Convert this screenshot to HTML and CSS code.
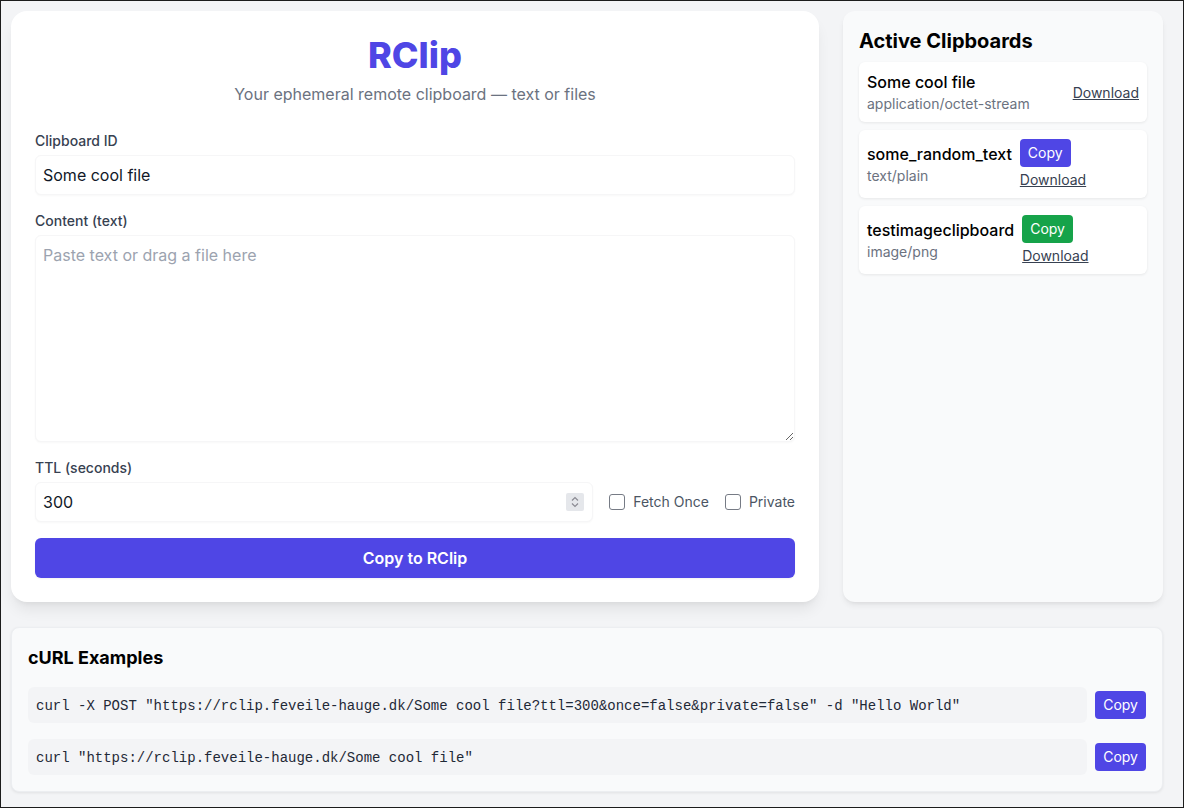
FILE: index.html
```html
<!DOCTYPE html>
<html lang="en">
<head>
<meta charset="utf-8">
<title>RClip</title>
<link rel="stylesheet" href="styles.css">
</head>
<body>
<div class="frame">
  <div class="top">
    <main class="card">
      <h1 class="title">RClip</h1>
      <p class="subtitle">Your ephemeral remote clipboard — text or files</p>

      <label class="label">Clipboard ID</label>
      <input class="field" type="text" value="Some cool file">

      <label class="label">Content (text)</label>
      <textarea class="field area" placeholder="Paste text or drag a file here"></textarea>

      <label class="label">TTL (seconds)</label>
      <div class="ttl-row">
        <div class="field num">
          <span class="num-val">300</span>
          <span class="spin">
            <svg width="10" height="14" viewBox="0 0 10 14"><path d="M2 5.5 5 2.5 8 5.5M2 8.5 5 11.5 8 8.5" fill="none" stroke="#8b8b93" stroke-width="1.2"/></svg>
          </span>
        </div>
        <label class="check"><span class="box"></span>Fetch Once</label>
        <label class="check"><span class="box"></span>Private</label>
      </div>

      <button class="primary">Copy to RClip</button>
    </main>

    <aside class="panel">
      <h2 class="panel-title">Active Clipboards</h2>
      <div class="items">
        <div class="item">
          <div class="meta">
            <div class="name">Some cool file</div>
            <div class="type">application/octet-stream</div>
          </div>
          <div class="actions"><a class="dl">Download</a></div>
        </div>
        <div class="item">
          <div class="meta">
            <div class="name">some_random_text</div>
            <div class="type">text/plain</div>
          </div>
          <div class="actions"><button class="btn">Copy</button><a class="dl">Download</a></div>
        </div>
        <div class="item">
          <div class="meta">
            <div class="name">testimageclipboard</div>
            <div class="type">image/png</div>
          </div>
          <div class="actions"><button class="btn green">Copy</button><a class="dl">Download</a></div>
        </div>
      </div>
    </aside>
  </div>

  <section class="curl">
    <h2 class="curl-title">cURL Examples</h2>
    <div class="code-row">
      <code class="code">curl -X POST "https://rclip.feveile-hauge.dk/Some cool file?ttl=300&amp;once=false&amp;private=false" -d "Hello World"</code>
      <button class="btn">Copy</button>
    </div>
    <div class="code-row">
      <code class="code">curl "https://rclip.feveile-hauge.dk/Some cool file"</code>
      <button class="btn">Copy</button>
    </div>
  </section>
</div>
</body>
</html>
```

FILE: styles.css
```css
* { box-sizing: border-box; }
html, body { margin: 0; padding: 0; }
body {
  font-family: Inter, "Noto Sans", sans-serif;
  color: #111827;
  background: #f3f4f6;
}
.frame {
  width: 1184px;
  height: 808px;
  border: 1px solid #1c1c1c;
  padding: 10px;
  background: #f3f4f6;
}
.top {
  width: 1152px;
  display: grid;
  grid-template-columns: 808px 320px;
  gap: 24px;
}
.card {
  background: #fff;
  border-radius: 16px;
  padding: 24px;
  box-shadow: 0 10px 15px -3px rgba(0,0,0,0.08), 0 4px 6px -4px rgba(0,0,0,0.08);
  display: flex;
  flex-direction: column;
}
.title {
  margin: 0 0 7px;
  text-align: center;
  font-size: 36px;
  line-height: 40px;
  font-weight: 800;
  color: #4f46e5;
}
.subtitle {
  margin: 0 0 25px;
  text-align: center;
  font-size: 16px;
  line-height: 24px;
  color: #6b7280;
}
.label {
  display: block;
  font-size: 14px;
  line-height: 20px;
  font-weight: 500;
  color: #374151;
  margin-bottom: 4px;
}
.field {
  display: block;
  width: 100%;
  height: 40px;
  border: 1px solid #f6f6f7;
  border-radius: 6px;
  box-shadow: 0 1px 2px rgba(0,0,0,0.03);
  padding: 8px 8px 8px 7px;
  font-family: Inter, "Noto Sans", sans-serif;
  font-size: 16px;
  line-height: 22px;
  color: #111827;
  background: #fff;
  outline: none;
  margin-bottom: 16px;
}
.area {
  height: 207px;
  resize: vertical;
}
.area::placeholder { color: #9ca3af; }
.ttl-row {
  display: flex;
  align-items: center;
  gap: 16px;
  margin-bottom: 16px;
}
.num {
  flex: 1;
  margin-bottom: 0;
  display: flex;
  align-items: center;
  justify-content: space-between;
}
.spin {
  width: 18px;
  height: 18px;
  background: #e5e7eb;
  border-radius: 2px;
  display: flex;
  align-items: center;
  justify-content: center;
}
.check {
  display: flex;
  align-items: center;
  gap: 8px;
  font-size: 14px;
  line-height: 20px;
  color: #4b5563;
}
.box {
  width: 16px;
  height: 16px;
  border: 1px solid #767b85;
  border-radius: 3px;
  background: #fff;
}
.primary {
  height: 40px;
  width: 100%;
  border: none;
  border-radius: 6px;
  background: #4f46e5;
  color: #fff;
  font-family: Inter, "Noto Sans", sans-serif;
  font-size: 16px;
  font-weight: 600;
  box-shadow: 0 1px 2px rgba(0,0,0,0.05);
}
.panel {
  background: #f9fafb;
  border-radius: 12px;
  padding: 16px;
  box-shadow: 0 4px 6px -1px rgba(0,0,0,0.07), 0 2px 4px -2px rgba(0,0,0,0.07);
}
.panel-title {
  margin: 0 0 7px;
  font-size: 20px;
  line-height: 28px;
  font-weight: 700;
  color: #000;
}
.items {
  display: flex;
  flex-direction: column;
  gap: 8px;
}
.item {
  background: #fff;
  border-radius: 6px;
  padding: 8px;
  box-shadow: 0 1px 3px rgba(0,0,0,0.08);
  display: flex;
  align-items: center;
  justify-content: space-between;
  gap: 8px;
}
.meta { flex: none; }
.name {
  font-size: 16px;
  line-height: 24px;
  font-weight: 500;
  color: #000;
}
.type {
  font-size: 14px;
  line-height: 20px;
  color: #6b7280;
}
.actions {
  display: flex;
  flex-wrap: wrap;
  align-items: center;
  column-gap: 8px;
  row-gap: 3px;
  flex: 0 1 auto;
  padding-top: 1px;
}
.dl {
  font-size: 14px;
  line-height: 20px;
  color: #374151;
  text-decoration: underline;
  cursor: pointer;
}
.btn {
  height: 28px;
  padding: 0 8px;
  border: none;
  border-radius: 4px;
  background: #4f46e5;
  color: #fff;
  font-family: Inter, "Noto Sans", sans-serif;
  font-size: 14px;
  line-height: 20px;
  flex: none;
}
.btn.green { background: #16a34a; }
.curl {
  width: 1152px;
  margin-top: 25px;
  background: #f9fafb;
  border: 1px solid #eceef1;
  border-radius: 8px;
  padding: 16px;
  box-shadow: 0 1px 3px rgba(0,0,0,0.08);
}
.curl-title {
  margin: 0 0 15px;
  font-size: 18px;
  line-height: 28px;
  font-weight: 700;
  color: #000;
}
.code-row {
  display: flex;
  align-items: center;
  gap: 8px;
}
.code-row + .code-row { margin-top: 16px; }
.code {
  flex: 1;
  display: block;
  background: #f3f4f6;
  border-radius: 6px;
  padding: 9px 8px 7px;
  font-family: "Liberation Mono", monospace;
  font-size: 14px;
  line-height: 20px;
  color: #1f2937;
  white-space: pre;
}
```
